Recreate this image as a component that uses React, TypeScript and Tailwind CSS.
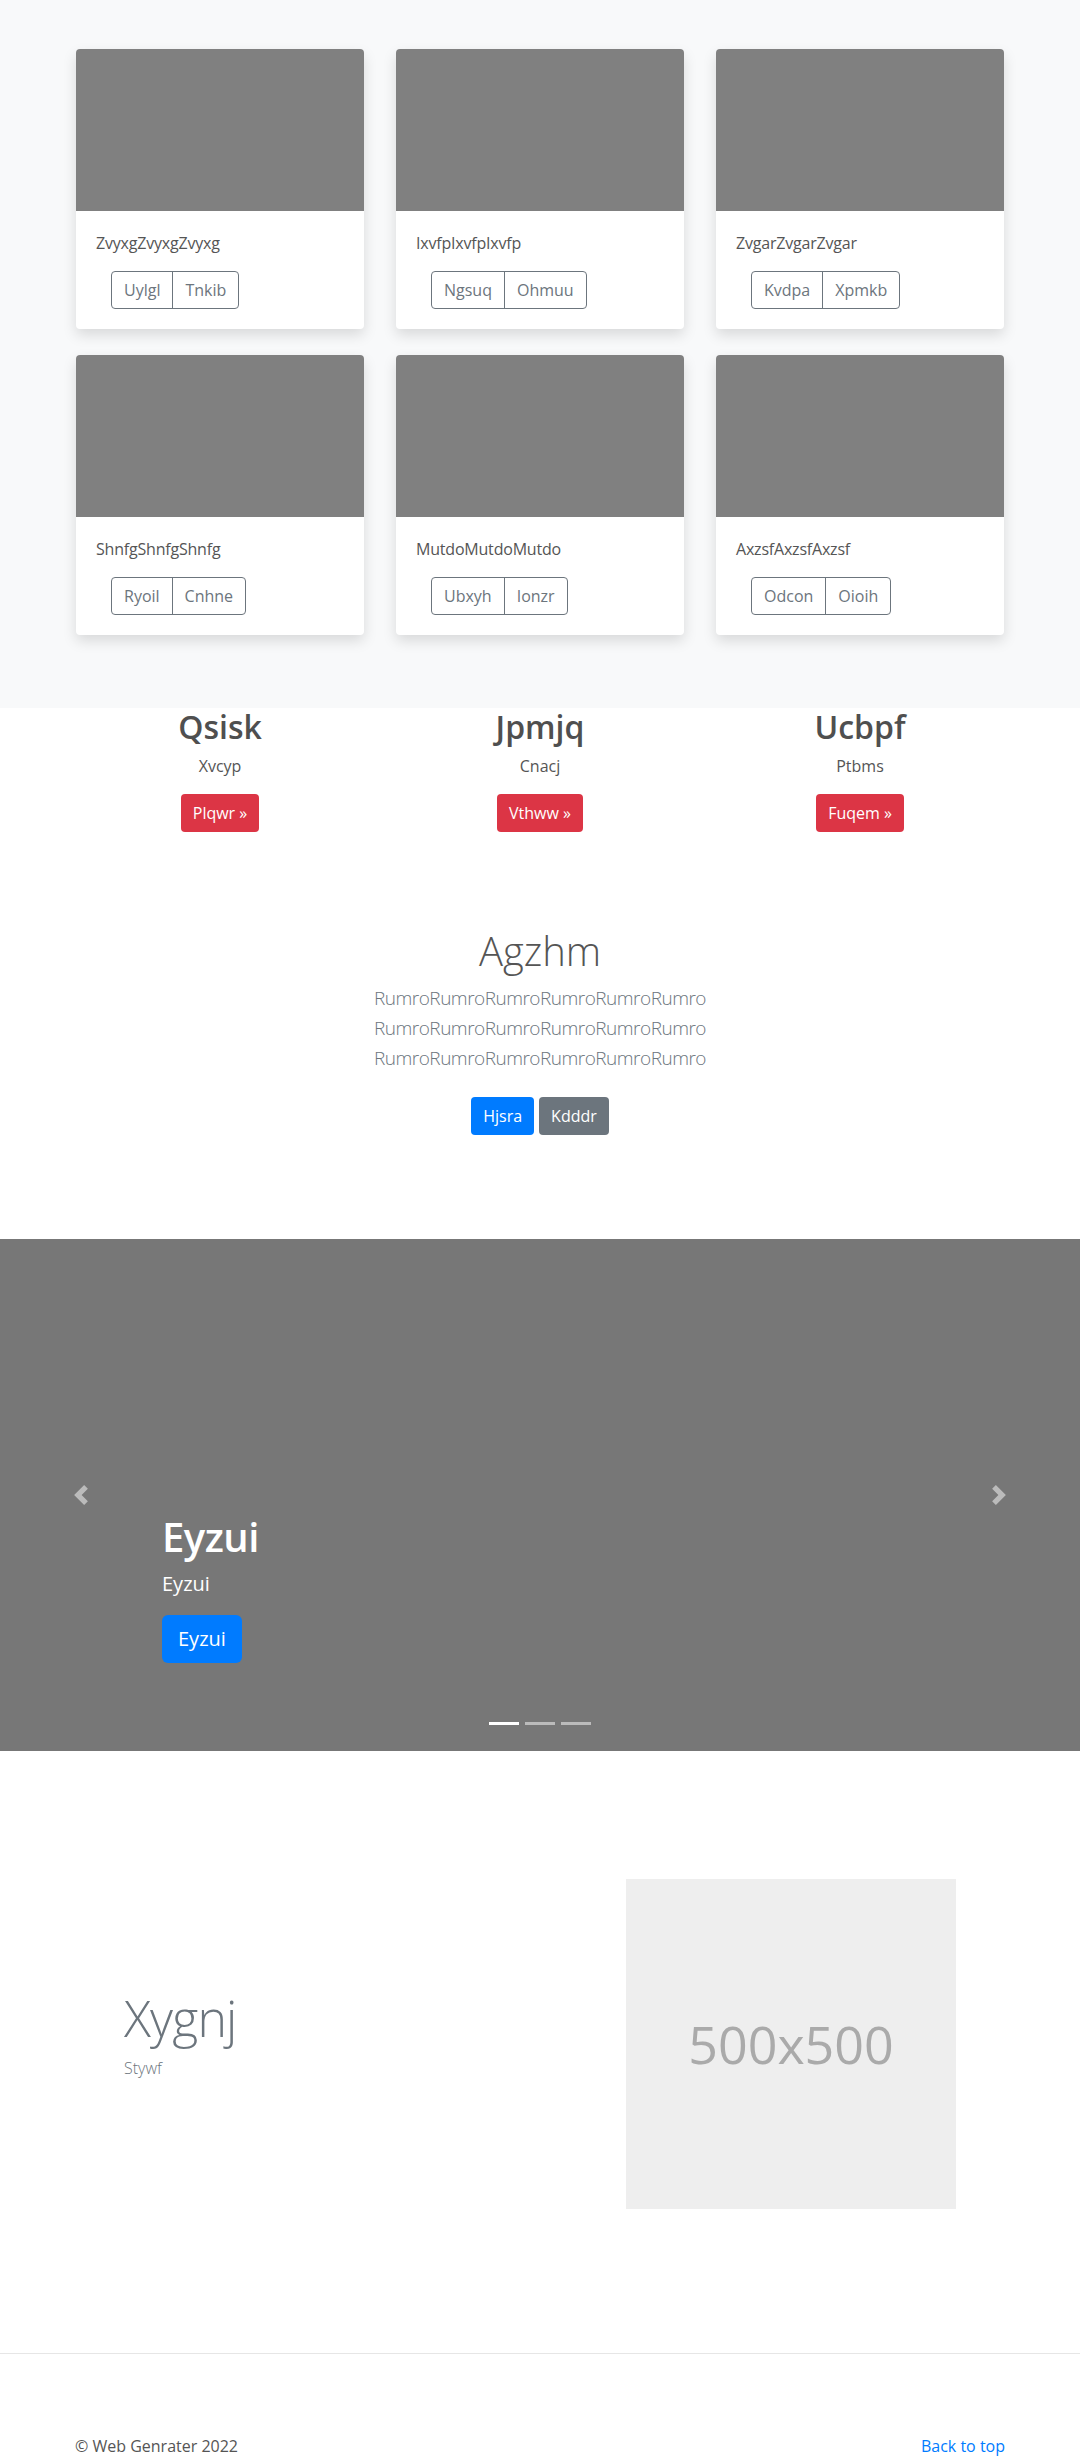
import React from "react";

const cards = [
  { title: "ZvyxgZvyxgZvyxg", buttons: ["Uylgl", "Tnkib"] },
  { title: "IxvfpIxvfpIxvfp", buttons: ["Ngsuq", "Ohmuu"] },
  { title: "ZvgarZvgarZvgar", buttons: ["Kvdpa", "Xpmkb"] },
  { title: "ShnfgShnfgShnfg", buttons: ["Ryoil", "Cnhne"] },
  { title: "MutdoMutdoMutdo", buttons: ["Ubxyh", "Ionzr"] },
  { title: "AxzsfAxzsfAxzsf", buttons: ["Odcon", "Oioih"] },
];

const columns = [
  { title: "Qsisk", text: "Xvcyp", action: "Plqwr »" },
  { title: "Jpmjq", text: "Cnacj", action: "Vthww »" },
  { title: "Ucbpf", text: "Ptbms", action: "Fuqem »" },
];

function AlbumCard({ title, buttons }: { title: string; buttons: string[] }) {
  return (
    <div className="bg-white rounded shadow-[0_6px_14px_rgba(0,0,0,0.13)] overflow-hidden">
      <div className="h-[162px] bg-[#808080]" />
      <div className="p-5">
        <p className="text-[16px] leading-6 tracking-[-0.2px] text-[#555] mb-4">{title}</p>
        <div className="ml-[15px] inline-flex border border-[#6c757d] rounded text-[#6c757d]">
          {buttons.map((b, i) => (
            <span
              key={b}
              className={
                "px-3 h-[36px] flex items-center text-[16px] " +
                (i > 0 ? "border-l border-[#6c757d]" : "")
              }
            >
              {b}
            </span>
          ))}
        </div>
      </div>
    </div>
  );
}

function Chevron({ dir }: { dir: "prev" | "next" }) {
  const d =
    dir === "prev"
      ? "M5.25 0l-4 4 4 4 1.5-1.5L4.25 4l2.5-2.5L5.25 0z"
      : "M2.75 0l-1.5 1.5L3.75 4l-2.5 2.5L2.75 8l4-4-4-4z";
  return (
    <svg width="20" height="20" viewBox="0 0 8 8" fill="#fff" className="opacity-50">
      <path d={d} />
    </svg>
  );
}

export default function App() {
  return (
    <div className="font-['Open_Sans',sans-serif] text-[#555] bg-white">
      {/* Album cards */}
      <section className="bg-[#f8f9fa] pt-[49px] pb-[73px]">
        <div className="w-[960px] mx-auto px-4 grid grid-cols-3 gap-x-8 gap-y-[26px]">
          {cards.map((c) => (
            <AlbumCard key={c.title} {...c} />
          ))}
        </div>
      </section>

      {/* Three columns */}
      <section className="w-[960px] mx-auto grid grid-cols-3 text-center">
        {columns.map((c) => (
          <div key={c.title} className="flex flex-col items-center">
            <h2 className="text-[32px] leading-[38px] font-semibold text-[#4f4f4f] mb-2">{c.title}</h2>
            <p className="text-[16px] leading-6 mb-4">{c.text}</p>
            <span className="bg-[#dc3545] text-white rounded px-3 h-[38px] flex items-center text-[16px]">
              {c.action}
            </span>
          </div>
        ))}
      </section>

      {/* Jumbotron */}
      <section className="text-center pt-[95px] pb-[104px]">
        <h1 className="text-[40px] leading-[48px] font-light text-[#555] mb-2">Agzhm</h1>
        <div className="text-[19px] leading-[30px] tracking-[-0.5px] font-light text-[#6c757d] mb-6">
          <p>RumroRumroRumroRumroRumroRumro</p>
          <p>RumroRumroRumroRumroRumroRumro</p>
          <p>RumroRumroRumroRumroRumroRumro</p>
        </div>
        <div className="flex justify-center gap-[5px]">
          <span className="bg-[#007bff] text-white rounded px-3 h-[38px] flex items-center text-[16px]">Hjsra</span>
          <span className="bg-[#6c757d] text-white rounded px-3 h-[38px] flex items-center text-[16px]">Kdddr</span>
        </div>
      </section>

      {/* Carousel */}
      <section className="relative h-[512px] bg-[#777] flex flex-col justify-end pl-[162px] pb-[88px] text-white">
        <h1 className="text-[40px] leading-[48px] font-semibold tracking-[-0.5px] mb-2">Eyzui</h1>
        <p className="text-[20px] leading-[30px] mb-4">Eyzui</p>
        <div>
          <span className="inline-flex items-center h-[48px] px-4 rounded-md bg-[#007bff] text-[20px]">Eyzui</span>
        </div>
        <div className="absolute left-0 top-0 h-full w-[15%] flex items-center justify-center">
          <Chevron dir="prev" />
        </div>
        <div className="absolute right-0 top-0 h-full w-[15%] flex items-center justify-center">
          <Chevron dir="next" />
        </div>
        <div className="absolute bottom-[26px] left-0 right-0 flex justify-center gap-[6px]">
          <span className="w-[30px] h-[3px] bg-white" />
          <span className="w-[30px] h-[3px] bg-white/50" />
          <span className="w-[30px] h-[3px] bg-white/50" />
        </div>
      </section>

      {/* Featurette */}
      <section className="px-[124px] pt-[128px] pb-[144px] flex items-center justify-between">
        <div className="pb-4">
          <h2 className="text-[50px] leading-[50px] font-light tracking-[-0.8px] text-[#6c757d] mb-[13px]">Xygnj</h2>
          <p className="text-[16px] leading-6 font-light text-[#6c757d]">Stywf</p>
        </div>
        <div className="w-[330px] h-[330px] bg-[#eee] flex items-center justify-center">
          <span className="text-[52px] text-[#aaa]">500x500</span>
        </div>
      </section>

      <hr className="border-0 border-t border-[#e6e6e6]" />

      {/* Footer */}
      <footer className="w-[960px] mx-auto px-[15px] pt-[80px] pb-12 flex justify-between text-[16px] leading-6">
        <p className="text-[#555]">© Web Genrater 2022</p>
        <span className="text-[#007bff]">Back to top</span>
      </footer>
    </div>
  );
}
